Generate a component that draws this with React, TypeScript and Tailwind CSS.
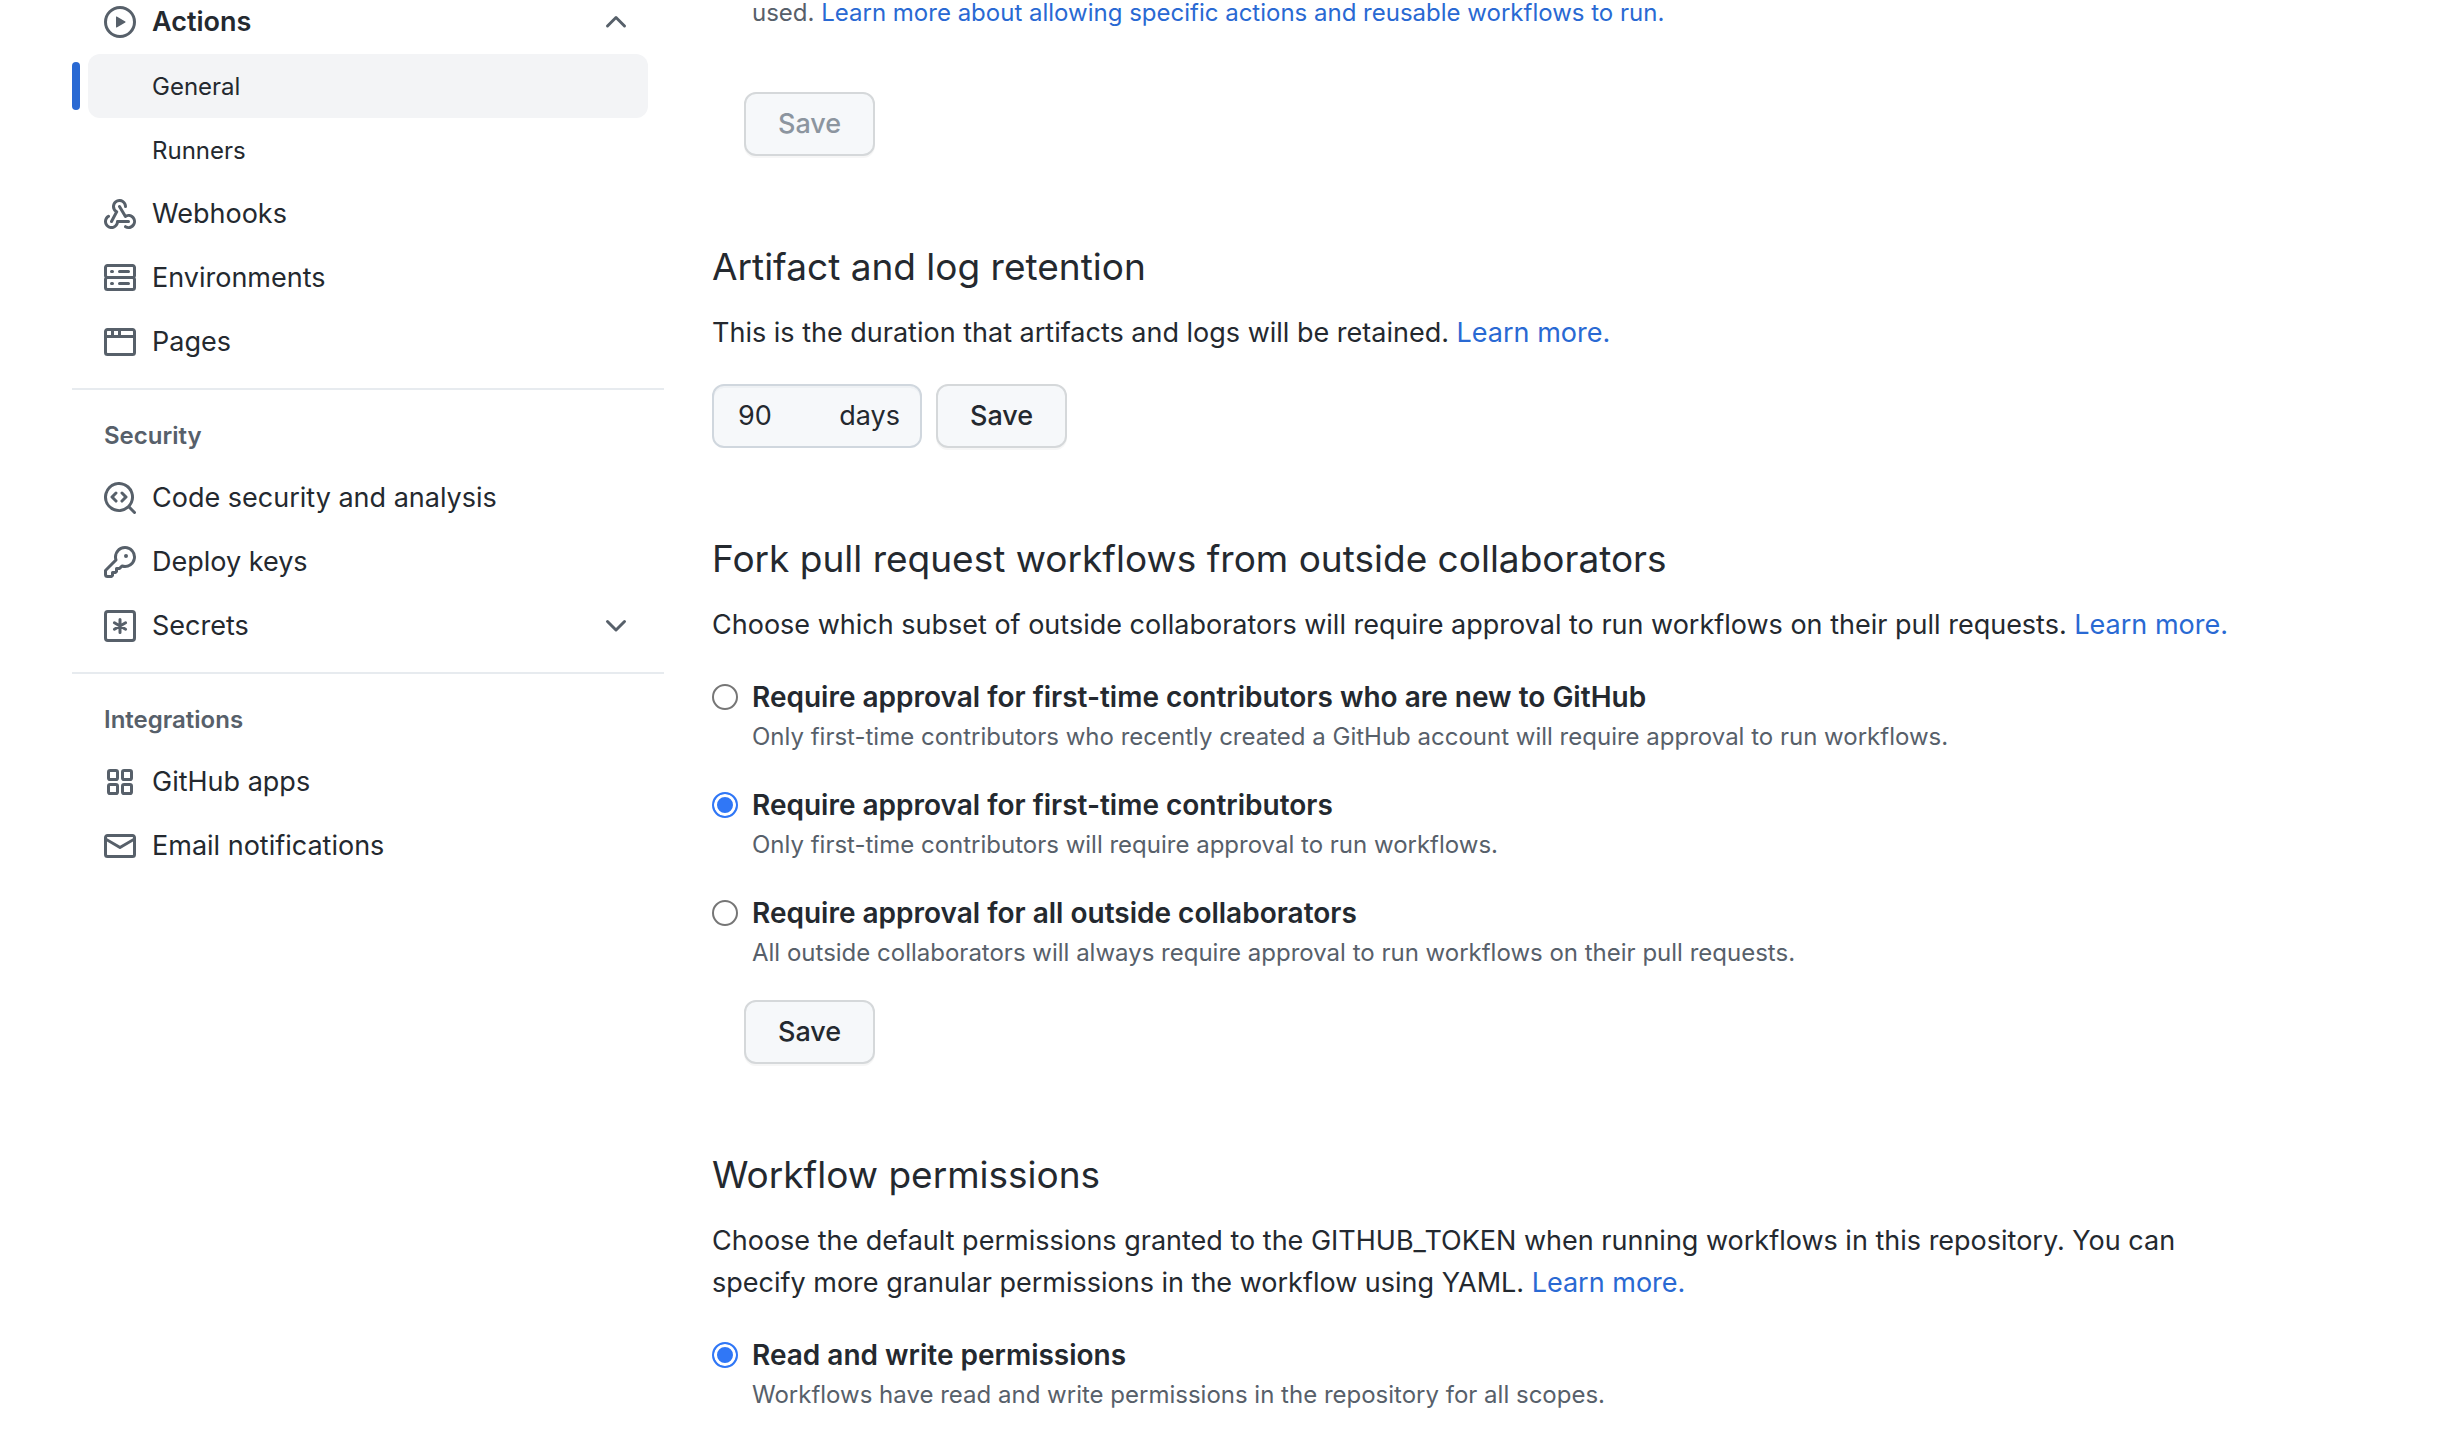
import { useState, type ReactNode } from "react";

const ICONS = {
  play: "M8 0a8 8 0 1 1 0 16A8 8 0 0 1 8 0ZM1.5 8a6.5 6.5 0 1 0 13 0 6.5 6.5 0 0 0-13 0Zm4.879-2.773 4.264 2.559a.25.25 0 0 1 0 .428l-4.264 2.559A.25.25 0 0 1 6 10.559V5.442a.25.25 0 0 1 .379-.215Z",
  webhook:
    "M5.5 4.25a2.25 2.25 0 0 1 4.5 0 .75.75 0 0 0 1.5 0 3.75 3.75 0 1 0-6.14 2.889l-2.272 4.258a.75.75 0 0 0 1.324.706L7 7.25a.75.75 0 0 0-.309-1.015A2.25 2.25 0 0 1 5.5 4.25ZM7.364 3.607a.75.75 0 0 1 1.03.257l2.608 4.349a3.75 3.75 0 1 1-.628 6.785.75.75 0 0 1 .752-1.299 2.25 2.25 0 1 0-.033-3.88.75.75 0 0 1-1.03-.256L7.107 4.636a.75.75 0 0 1 .257-1.03ZM2.9 8.776A.75.75 0 0 1 2.625 9.8 2.25 2.25 0 1 0 6 11.75a.75.75 0 0 1 .75-.751h5.5a.75.75 0 0 1 0 1.5H7.425a3.751 3.751 0 1 1-5.55-3.998.75.75 0 0 1 1.024.274Z",
  server:
    "M1.75 1h12.5c.966 0 1.75.784 1.75 1.75v4c0 .372-.116.717-.314 1 .198.283.314.628.314 1v4a1.75 1.75 0 0 1-1.75 1.75H1.75A1.75 1.75 0 0 1 0 12.75v-4c0-.358.109-.707.314-1a1.739 1.739 0 0 1-.314-1v-4C0 1.784.784 1 1.75 1ZM1.5 2.75v4c0 .138.112.25.25.25h12.5a.25.25 0 0 0 .25-.25v-4a.25.25 0 0 0-.25-.25H1.75a.25.25 0 0 0-.25.25Zm.25 5.75a.25.25 0 0 0-.25.25v4c0 .138.112.25.25.25h12.5a.25.25 0 0 0 .25-.25v-4a.25.25 0 0 0-.25-.25ZM7 4.75A.75.75 0 0 1 7.75 4h4.5a.75.75 0 0 1 0 1.5h-4.5A.75.75 0 0 1 7 4.75ZM7.75 10h4.5a.75.75 0 0 1 0 1.5h-4.5a.75.75 0 0 1 0-1.5ZM3 4.75A.75.75 0 0 1 3.75 4h.5a.75.75 0 0 1 0 1.5h-.5A.75.75 0 0 1 3 4.75ZM3.75 10h.5a.75.75 0 0 1 0 1.5h-.5a.75.75 0 0 1 0-1.5Z",
  browser:
    "M0 2.75C0 1.784.784 1 1.75 1h12.5c.966 0 1.75.784 1.75 1.75v10.5A1.75 1.75 0 0 1 14.25 15H1.75A1.75 1.75 0 0 1 0 13.25ZM14.5 6h-13v7.25c0 .138.112.25.25.25h12.5a.25.25 0 0 0 .25-.25Zm-6-3.5v2h6V2.75a.25.25 0 0 0-.25-.25ZM5 2.5v2h2v-2Zm-3.25 0a.25.25 0 0 0-.25.25V4.5h2v-2Z",
  codescan:
    "M8.47 4.97a.75.75 0 0 0 0 1.06L9.94 7.5 8.47 8.97a.75.75 0 1 0 1.06 1.06l2-2a.75.75 0 0 0 0-1.06l-2-2a.75.75 0 0 0-1.06 0ZM6.53 6.03a.75.75 0 0 0-1.06-1.06l-2 2a.75.75 0 0 0 0 1.06l2 2a.75.75 0 1 0 1.06-1.06L5.06 7.5l1.47-1.47ZM12.246 13.307a7.501 7.501 0 1 1 1.06-1.06l2.474 2.473a.749.749 0 1 1-1.06 1.06l-2.474-2.473ZM1.5 7.5a6.002 6.002 0 0 0 3.608 5.504 6.002 6.002 0 0 0 6.486-1.117.748.748 0 0 1 .292-.293A6 6 0 1 0 1.5 7.5Z",
  key: "M10.5 0a5.499 5.499 0 1 1-1.288 10.848l-.932.932a.749.749 0 0 1-.53.22H7v.75a.749.749 0 0 1-.22.53l-.5.5a.749.749 0 0 1-.53.22H5v.75a.749.749 0 0 1-.22.53l-.5.5a.749.749 0 0 1-.53.22h-2A1.75 1.75 0 0 1 0 14.25v-2c0-.199.079-.389.22-.53l4.932-4.932A5.5 5.5 0 0 1 10.5 0Zm-4 5.5c-.001.431.069.86.205 1.269a.75.75 0 0 1-.181.768L1.5 12.56v1.69c0 .138.112.25.25.25h1.69l.06-.06v-1.19a.75.75 0 0 1 .75-.75h1.19l.06-.06v-1.19a.75.75 0 0 1 .75-.75h1.19l1.023-1.025a.75.75 0 0 1 .768-.18A4 4 0 1 0 6.5 5.5ZM11 6a1 1 0 1 1 0-2 1 1 0 0 1 0 2Z",
  mail: "M1.75 2h12.5c.966 0 1.75.784 1.75 1.75v8.5A1.75 1.75 0 0 1 14.25 14H1.75A1.75 1.75 0 0 1 0 12.25v-8.5C0 2.784.784 2 1.75 2ZM1.5 12.251c0 .138.112.25.25.25h12.5a.25.25 0 0 0 .25-.25V5.809L8.38 9.397a.75.75 0 0 1-.76 0L1.5 5.809v6.442Zm13-8.181v-.32a.25.25 0 0 0-.25-.25H1.75a.25.25 0 0 0-.25.25v.32L8 7.88Z",
  chevronUp:
    "M3.22 10.53a.749.749 0 0 1 0-1.06l4.25-4.25a.749.749 0 0 1 1.06 0l4.25 4.25a.749.749 0 1 1-1.06 1.06L8 6.811 4.28 10.53a.749.749 0 0 1-1.06 0Z",
  chevronDown:
    "M12.78 5.22a.749.749 0 0 1 0 1.06l-4.25 4.25a.749.749 0 0 1-1.06 0L3.22 6.28a.749.749 0 1 1 1.06-1.06L8 8.939l3.72-3.719a.749.749 0 0 1 1.06 0Z",
};

function Icon({ name }: { name: keyof typeof ICONS }) {
  return (
    <svg viewBox="0 0 16 16" className="size-8 shrink-0 fill-[#57606a]" aria-hidden="true">
      <path d={ICONS[name]} />
    </svg>
  );
}

function AsteriskIcon() {
  return (
    <svg viewBox="0 0 16 16" className="size-8 shrink-0 fill-none stroke-[#57606a]" strokeWidth="1.5" strokeLinecap="round" aria-hidden="true">
      <rect x="0.75" y="0.75" width="14.5" height="14.5" rx="1.2" />
      <path d="M8 4.75v6.5M5.2 6.38l5.6 3.24M5.2 9.62l5.6-3.24" />
    </svg>
  );
}

function AppsIcon() {
  return (
    <svg viewBox="0 0 16 16" className="size-8 shrink-0 fill-none stroke-[#57606a]" strokeWidth="1.5" aria-hidden="true">
      <rect x="2.25" y="2.25" width="4.5" height="4.5" rx="0.8" />
      <rect x="9.25" y="2.25" width="4.5" height="4.5" rx="0.8" />
      <rect x="2.25" y="9.25" width="4.5" height="4.5" rx="0.8" />
      <rect x="9.25" y="9.25" width="4.5" height="4.5" rx="0.8" />
    </svg>
  );
}

function NavLink({ icon, children }: { icon: ReactNode; children: ReactNode }) {
  return (
    <li>
      <a href="#" className="mx-4 flex h-16 items-center gap-4 rounded-xl px-4">
        {icon}
        {children}
      </a>
    </li>
  );
}

function NavToggle({ icon, open, bold, children }: { icon: ReactNode; open: boolean; bold?: boolean; children: ReactNode }) {
  return (
    <div className="px-4">
      <button
        type="button"
        aria-expanded={open}
        className={"flex h-16 w-full items-center gap-4 rounded-xl px-4 text-left " + (bold ? "font-semibold" : "")}
      >
        {icon}
        <span className="flex-1">{children}</span>
        <Icon name={open ? "chevronUp" : "chevronDown"} />
      </button>
    </div>
  );
}

function NavHeading({ children }: { children: ReactNode }) {
  return <h3 className="px-8 py-3 text-2xl leading-9 font-semibold text-[#57606a]">{children}</h3>;
}

function NavDivider() {
  return <hr className="mt-3.5 mb-4 border-t-2 border-[#e7ebef]" />;
}

function Sidebar() {
  return (
    <nav aria-label="Repository settings" className="-mt-2.5 w-[592px] shrink-0">
      <NavToggle icon={<Icon name="play" />} open bold>
        Actions
      </NavToggle>
      <ul className="text-2xl">
        <li className="flex items-center gap-2">
          <span className="h-12 w-2 rounded-xl bg-[#2969d3]" />
          <a href="#" aria-current="page" className="mr-4 flex h-16 flex-1 items-center rounded-xl bg-[#f3f4f6] pt-0.5 pl-16">
            General
          </a>
        </li>
        <li>
          <a href="#" className="mx-4 flex h-16 items-center pt-0.5 pl-16">
            Runners
          </a>
        </li>
      </ul>
      <ul>
        <NavLink icon={<Icon name="webhook" />}>Webhooks</NavLink>
        <NavLink icon={<Icon name="server" />}>Environments</NavLink>
        <NavLink icon={<Icon name="browser" />}>Pages</NavLink>
      </ul>
      <NavDivider />
      <NavHeading>Security</NavHeading>
      <ul>
        <NavLink icon={<Icon name="codescan" />}>Code security and analysis</NavLink>
        <NavLink icon={<Icon name="key" />}>Deploy keys</NavLink>
        <li>
          <NavToggle icon={<AsteriskIcon />} open={false}>
            Secrets
          </NavToggle>
        </li>
      </ul>
      <NavDivider />
      <NavHeading>Integrations</NavHeading>
      <ul>
        <NavLink icon={<AppsIcon />}>GitHub apps</NavLink>
        <NavLink icon={<Icon name="mail" />}>Email notifications</NavLink>
      </ul>
    </nav>
  );
}

function SaveButton({ disabled }: { disabled?: boolean }) {
  return (
    <button
      type="button"
      disabled={disabled}
      className="h-16 rounded-xl border-2 border-[#d5d8da] bg-[#f6f8fa] px-8 font-medium shadow-[0_2px_0_rgba(27,31,36,0.04)] disabled:text-[#8c959f]"
    >
      Save
    </button>
  );
}

function TextLink({ children }: { children: ReactNode }) {
  return (
    <a href="#" className="text-[#2969d3]">
      {children}
    </a>
  );
}

function Section({ title, children }: { title: string; children: ReactNode }) {
  return (
    <section className="mt-20">
      <h2 className="mb-3.5 text-[37px] leading-[62px]">{title}</h2>
      {children}
    </section>
  );
}

type Choice = { id: string; label: string; note: string };

function RadioList({ name, choices, initial }: { name: string; choices: Choice[]; initial: string }) {
  const [value, setValue] = useState(initial);
  return (
    <div className="mt-[30px] grid gap-7">
      {choices.map((c) => (
        <div key={c.id} className="flex gap-3.5">
          <input
            type="radio"
            id={c.id}
            name={name}
            checked={value === c.id}
            onChange={() => setValue(c.id)}
            aria-describedby={c.id + "-note"}
            className="mt-2 size-[26px] shrink-0 appearance-none rounded-full border-2 border-[#767676] bg-white checked:border-[#3077f6] checked:bg-[#3077f6] checked:shadow-[inset_0_0_0_3px_white]"
          />
          <div>
            <label htmlFor={c.id} className="block text-[28px] leading-[42px] font-semibold">
              {c.label}
            </label>
            <p id={c.id + "-note"} className="text-2xl leading-[38px] text-[#57606a]">
              {c.note}
            </p>
          </div>
        </div>
      ))}
    </div>
  );
}

const APPROVAL: Choice[] = [
  {
    id: "new",
    label: "Require approval for first-time contributors who are new to GitHub",
    note: "Only first-time contributors who recently created a GitHub account will require approval to run workflows.",
  },
  {
    id: "first",
    label: "Require approval for first-time contributors",
    note: "Only first-time contributors will require approval to run workflows.",
  },
  {
    id: "all",
    label: "Require approval for all outside collaborators",
    note: "All outside collaborators will always require approval to run workflows on their pull requests.",
  },
];

const PERMISSIONS: Choice[] = [
  {
    id: "write",
    label: "Read and write permissions",
    note: "Workflows have read and write permissions in the repository for all scopes.",
  },
];

export default function App() {
  return (
    <div className="flex min-h-screen gap-12 bg-white px-[72px] font-[Inter,'Liberation_Sans',sans-serif] text-[27px] leading-[42px] text-[#24292f]">
      <Sidebar />
      <main className="max-w-[1550px] min-w-0 flex-1">
        <p className="pl-10 text-2xl leading-[26px] text-[#57606a]">
          used. <TextLink>Learn more about allowing specific actions and reusable workflows to run.</TextLink>
        </p>
        <div className="mt-[66px] ml-8">
          <SaveButton disabled />
        </div>

        <Section title="Artifact and log retention">
          <p>
            This is the duration that artifacts and logs will be retained. <TextLink>Learn more.</TextLink>
          </p>
          <form className="mt-[30px] flex gap-3.5">
            <label className="flex h-16 w-[210px] items-center justify-between rounded-xl border-2 border-[#d0d7de] bg-[#f6f8fa] pr-5 pl-6 shadow-[inset_0_2px_0_rgba(208,215,222,0.2)]">
              <input type="text" inputMode="numeric" defaultValue="90" className="w-16 bg-transparent outline-none" />
              days
            </label>
            <SaveButton />
          </form>
        </Section>

        <Section title="Fork pull request workflows from outside collaborators">
          <p>
            Choose which subset of outside collaborators will require approval to run workflows on their pull requests.{" "}
            <TextLink>Learn more.</TextLink>
          </p>
          <RadioList name="approval" choices={APPROVAL} initial="first" />
          <div className="mt-7 ml-8">
            <SaveButton />
          </div>
        </Section>

        <Section title="Workflow permissions">
          <p>
            Choose the default permissions granted to the GITHUB_TOKEN when running workflows in this repository. You can
            specify more granular permissions in the workflow using YAML. <TextLink>Learn more.</TextLink>
          </p>
          <RadioList name="permissions" choices={PERMISSIONS} initial="write" />
        </Section>
      </main>
    </div>
  );
}
